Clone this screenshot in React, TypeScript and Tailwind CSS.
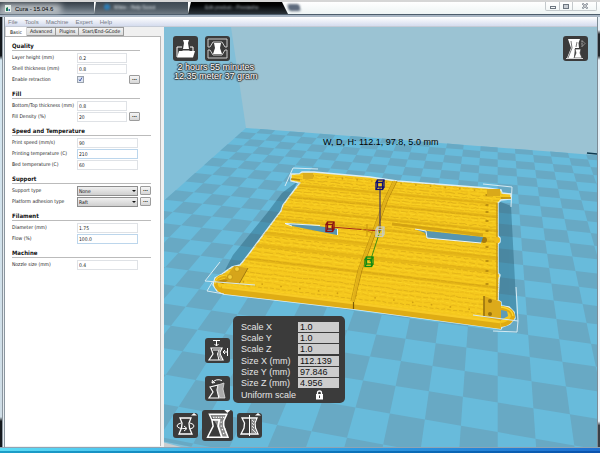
import React from "react";

type Pt = [number, number];

const poly = (pts: Pt[]) => pts.map(([x, y]) => `${x.toFixed(1)},${y.toFixed(1)}`).join(" ");

/* ---------- build plate ---------- */

const DEPTH = 21.8;

// Projects a plate position, counted in 10 mm tiles from the back left corner.
function project(u: number, v: number): Pt {
  const s = u * 0.005255;
  const t = v * 0.0251;
  const w = 1 - s - t;
  return [(246 + 2496 * s - 497.7 * t) / w, (128 + 85 * s + 95 * t) / w];
}

function Floor() {
  const tiles: React.ReactNode[] = [];
  for (let k = -1; k < 22; k++) {
    const v0 = Math.max(0, k + 0.7);
    const v1 = Math.min(DEPTH, k + 1.7);
    if (v1 <= v0) continue;
    for (let u = 0; u < 26; u++) {
      if ((u + k + 2) % 2 !== 0) continue;
      tiles.push(
        <polygon
          key={`${u}:${k}`}
          points={poly([project(u, v0), project(u + 1, v0), project(u + 1, v1), project(u, v1)])}
        />,
      );
    }
  }
  return (
    <g>
      <polygon
        fill="#68bbdb"
        points={poly([project(0, 0), project(26, 0), project(26, DEPTH), project(0, DEPTH)])}
      />
      <g fill="#68a9c4">{tiles}</g>
    </g>
  );
}

/* ---------- printed part ---------- */

const TL: Pt = [302, 174];
const TR: Pt = [497, 191];
const BL: Pt = [222, 287];
const BR: Pt = [499, 321];

function onPart(a: number, b: number): Pt {
  const bb = (b * 0.78) / (1 - b * 0.22);
  const lx = TL[0] + (BL[0] - TL[0]) * bb;
  const ly = TL[1] + (BL[1] - TL[1]) * bb;
  const rx = TR[0] + (BR[0] - TR[0]) * bb;
  const ry = TR[1] + (BR[1] - TR[1]) * bb;
  return [lx + (rx - lx) * a, ly + (ry - ly) * a];
}

function noise(n: number) {
  const x = Math.sin(n * 127.1 + 11.7) * 43758.5453;
  return x - Math.floor(x);
}

const OUTLINE =
  "291,174 299,174 302,172 314,172 370,177 397,181 487,188 501,190 502,193 511,194 511,199 501,200 498,203 498,236 500,238 500,242 498,244 498,273 500,275 499,279 498,300 501,302 501,306 509,307 514,312 515,318 510,324 502,327 501,329 488,327 353,309 224,294 217,291 213,285 215,278 222,274 232,267 240,265 245,259 263,235 281,211 283,205 292,193 300,183 291,181";

function Ribs() {
  const ribs: React.ReactNode[] = [];
  const shades = ["#d6a616", "#ffdc2c", "#e3b118", "#fbd024", "#cf9f16", "#ffd628"];
  for (let i = 0; i < 66; i++) {
    const b = i / 66;
    const pts: Pt[] = [];
    for (let j = 0; j <= 70; j++) {
      const [x, y] = onPart(-0.03 + (j * 1.06) / 70, b);
      pts.push([x, y + (noise(i * 71 + j) - 0.5) * 1.4]);
    }
    const dash = `${3 + Math.round(noise(i) * 7)} ${1 + Math.round(noise(i + 9) * 2)}`;
    ribs.push(
      <polyline
        key={i}
        points={poly(pts)}
        stroke={shades[i % 6]}
        strokeWidth="0.9"
        strokeDasharray={dash}
        fill="none"
        opacity={0.6}
      />,
    );
  }
  const bands = [
    [0.12, 3],
    [0.24, 3],
    [0.36, 3],
    [0.45, 3],
    [0.58, 4],
    [0.68, 3],
    [0.79, 3],
  ];
  return (
    <g clipPath="url(#part)">
      {ribs}
      {bands.map(([b, size]) => {
        const l = onPart(-0.03, b);
        const r = onPart(1, b);
        return (
          <line
            key={b}
            x1={l[0]}
            y1={l[1]}
            x2={r[0]}
            y2={r[1]}
            stroke="#c8960f"
            strokeWidth={size}
            opacity="0.35"
          />
        );
      })}
    </g>
  );
}

function Rivets() {
  const rows = [
    { y: 0.01, n: 12 },
    { y: 0.95, n: 13 },
  ];
  return (
    <g fill="#cf9f12">
      {rows.flatMap(({ y, n }) =>
        Array.from({ length: n }, (_, i) => {
          const [x, yy] = onPart(0.06 + (i * 0.9) / n, y);
          return <circle key={`${y}-${i}`} cx={x} cy={yy} r="0.9" />;
        }),
      )}
      {[195, 205, 212, 221, 231, 247, 261, 271, 284].map((y) => (
        <ellipse key={y} cx={487} cy={y} rx="1.8" ry="1.1" fill="#b88c10" />
      ))}
    </g>
  );
}

function CubeHandle({ x, y, color }: { x: number; y: number; color: string }) {
  return (
    <g transform={`translate(${x} ${y})`} stroke={color} strokeWidth="1.3" fill="none">
      <rect x="-4" y="-2.5" width="6.5" height="7" />
      <rect x="-2.5" y="-5" width="6.5" height="7" />
      <path d="M-4-2.5L-2.5-5M2.5-2.5L4-5M2.5 4.5L4 2M-4 4.5L-2.5 2" />
    </g>
  );
}

function Scene() {
  return (
    <svg
      className="absolute inset-0 h-full w-full"
      viewBox="164 27 433 420"
      preserveAspectRatio="xMinYMin slice"
      aria-hidden="true"
    >
      <clipPath id="part">
        <polygon points={OUTLINE} />
      </clipPath>
      <rect x="164" y="27" width="900" height="900" fill="#9bc3d3" />
      <polygon points="164,27 231,27 246,128 246,447 164,447" fill="#82bfd8" />
      <Floor />
      <polygon points="164,442.5 181,447 164,447" fill="#c9ced0" />
      <path d="M587 153L597 154" stroke="#0d3a50" strokeWidth="1.6" />

      <g fill="#083a52" opacity="0.3">
        <polygon points="298,181 282,193 267,213 233,255 225,270 243,267 282,212" />
        <polygon points="498,201 511,206 517,320 510,308 499,303" />
      </g>

      <polygon points={OUTLINE} fill="#f5c81e" stroke="#dbeef5" strokeWidth="1.4" />
      <Ribs />
      <path d="M397 181L388 199L362 270L354 302" stroke="#b98b0e" strokeWidth="1" fill="none" />
      <path d="M393 181L384 200L358 270L351 301" stroke="#b98b0e" strokeWidth="1" fill="none" opacity="0.7" />
      <path d="M395 181L386 200L360 270L353 302" stroke="#e0b01a" strokeWidth="2.4" fill="none" />
      <polygon points="222,286 353,302 500,321 501,329 353,309 224,294 217,291" fill="#dfac14" />
      <path d="M222 287L353 303L500 322" stroke="#f8cb26" strokeWidth="2.4" fill="none" />
      <path d="M353.5 302V309" stroke="#7a5a08" strokeWidth="1.2" />
      <Rivets />

      <polygon points="234,266 248,268 239,284 222,283" fill="#d6a51a" />
      <path d="M248 268L239 284" stroke="#a27a10" strokeWidth="1" />
      <g fill="#f7d03a" stroke="#b4880f" strokeWidth="0.6">
        <circle cx="237" cy="269" r="2.4" />
        <circle cx="230" cy="277" r="2.4" />
      </g>
      <path d="M226 276Q216 276 216 284Q216 289 222 290" stroke="#e0ac12" strokeWidth="3.5" fill="none" />
      <path d="M226 275Q215 276 215 284" stroke="#fbd22c" strokeWidth="1.2" fill="none" />
      <path d="M217 282Q221 278 228 280L223 284Z" fill="#b98a10" />

      <polygon points="484,296 501,302 501,321 483,317" fill="#dcaa1b" />
      <path d="M484 296V317" stroke="#8d6a0d" strokeWidth="1.4" />
      <g fill="#96700c">
        <circle cx="490" cy="301" r="2" />
        <circle cx="490" cy="314" r="2" />
      </g>
      <polygon points="501,309 507,311 508,316 501,320" fill="#5e9bb5" />
      <path d="M501 308Q513 309 513 317Q510 324 501 325" stroke="#e0aa10" strokeWidth="4" fill="none" />
      <path d="M501 307Q512 308 513 316" stroke="#fcd62e" strokeWidth="1.4" fill="none" />
      <rect x="303" y="173" width="10" height="6" fill="#dcae1c" />
      <rect x="487" y="189" width="13" height="7" fill="#d9a91a" />
      <path d="M291 179L300 180M501 198L511 198" stroke="#b98a0d" strokeWidth="1.6" />
      <path d="M497 203V300" stroke="#c7940e" strokeWidth="1.4" />
      <circle cx="484" cy="240" r="3" fill="#a67a0b" />
      <circle cx="497" cy="240" r="3" fill="#f0bd1a" />

      <polygon points="285,223 304,224 338,229 337,235 292,226" fill="#5795b0" />
      <path d="M292 226L285 223.5L320 225.5M337.5 229V235" stroke="#e9f5fa" strokeWidth="1" fill="none" />
      <polygon points="415,229 427,231 483,237 481,243 427,238 425,233" fill="#5795b0" />
      <path d="M415 229L426 231L427 238L481 243" stroke="#e9f5fa" strokeWidth="1" fill="none" />
      <path d="M392 224L483 235" stroke="#c18f0e" strokeWidth="3" opacity="0.6" />

      <g stroke="#d5eaf2" strokeWidth="1" fill="none">
        <path d="M285 186L293 168L318 169" />
        <path d="M220 262L205 281L255 285M213 281L207 291L224 294" />
        <path d="M483 184L512 187L511 207" />
        <path d="M473 315L518 321L516 287M493 331L517 332L518 321" />
      </g>

      <path d="M331 227L380 231" stroke="#a3261a" strokeWidth="1" />
      <path d="M380 187V231" stroke="#241c66" strokeWidth="1" />
      <path d="M380 231L370 262" stroke="#3f8f13" strokeWidth="1" />
      <path d="M367 224V236M361 229L373 233" stroke="#c79310" strokeWidth="1" />
      <CubeHandle x={380} y={232} color="#c9cdb8" />
      <CubeHandle x={330} y={227} color="#8b1212" />
      <CubeHandle x={380} y={185} color="#101075" />
      <CubeHandle x={369} y={262} color="#128a12" />
    </svg>
  );
}

/* ---------- tool icons ---------- */

function Tool({ label, large, children }: { label: string; large?: boolean; children: React.ReactNode }) {
  return (
    <button
      type="button"
      aria-label={label}
      className={`block rounded-[3px] bg-[#3b3b3b] ${large ? "h-[31px] w-[31px]" : "h-[25px] w-[25px]"}`}
    >
      <svg viewBox="0 0 25 25" className="h-full w-full" fill="none" stroke="#fff" strokeWidth="1">
        {children}
      </svg>
    </button>
  );
}

const LoadIcon = () => (
  <Tool label="Load model">
    <path d="M10 4h6l-1 3 1 6h-6l1-6z" fill="#fff" stroke="none" />
    <path d="M9 11H4V21M17 11H20V15" />
    <path d="M6 15H9L10 14.5H16L17 15H22L20 21.5H4Z" fill="#fff" stroke="none" />
  </Tool>
);

const SaveIcon = () => (
  <Tool label="Save toolpath">
    <path d="M3 11V3H22V11H20L17 6H8L5 11ZM3 14V22H22V14H20L17 19H8L5 14Z" stroke="#ccc" />
    <path d="M9 7H16L15 12L17 18H8L10 12Z" fill="#fff" stroke="none" />
  </Tool>
);

const ViewIcon = () => (
  <Tool label="View mode">
    <path d="M5 3H17L15.5 7L16 12H12L11 22H4L8 12Z" fill="#fff" stroke="none" />
    <path d="M8 5L9 12L5 22M14 6L13 11" stroke="#555" strokeWidth="0.8" />
    <path d="M12 13H18L17 17L19 22H11L13 17Z" fill="#fff" stroke="#3b3b3b" strokeWidth="0.7" />
    <path d="M3 22.5H20" strokeWidth="0.8" />
    <path d="M19 4.5L22 7.5L19 10.5Z" stroke="#ccc" strokeDasharray="1 0.6" />
  </Tool>
);

const RotateIcon = () => (
  <Tool label="Rotate">
    <path d="M7 5H18L16 10L16.5 15L19 21H6L8.5 15L9 10Z" strokeWidth="1.3" />
    <path d="M8 10Q4 11 4 13Q5 16 13 15.5M17 10Q21 11 21 13Q21 15 17 16M11 13L14 15.5L11 18" />
    <path d="M18 2.5L21 0L24 2.5Z" fill="#fff" stroke="none" />
  </Tool>
);

const ScaleIcon = () => (
  <Tool label="Scale" large>
    <path d="M7 4H20L18 8L17.5 13L21 22H16L13 14Z" fill="#8a8a8a" stroke="none" />
    <path d="M6 3.5H20L17.5 9L17.5 13L21 22H4.5L9 13L8 8Z" strokeWidth="1.2" />
    <path d="M8 8H14L13 13L16 22" strokeWidth="1.4" />
    <path d="M9 6H19M15 10L18 9M15 13H18M16 16L19 15M17 19L20 18" strokeDasharray="1 1" />
    <path d="M18 0H23L20.500 2.500Z" fill="#fff" stroke="none" />
  </Tool>
);

const MirrorIcon = () => (
  <Tool label="Mirror">
    <path d="M5 5H20L18 10L18.5 15L21 21H4L7 15L7.5 10Z" strokeWidth="1.3" />
    <path d="M14 6H19L17 11L18 16L20 20H14Z" fill="#888" stroke="none" />
    <path d="M15 7L17 9M15 10L17 12M15 13L17 15M15 16L19 20" strokeWidth="0.8" />
    <path d="M12.5 2V23" />
    <path d="M18 2.5L21 0L24 2.5Z" fill="#fff" stroke="none" />
  </Tool>
);

const ScaleMaxIcon = () => (
  <Tool label="Scale to maximum size">
    <path d="M8 2.5H15M11.5 3V8M9.5 6L11.5 8L13.5 6" />
    <path d="M22.5 10V18M22 14H18M20 12L18 14L20 16" />
    <path d="M6 10H17L15 14L15.5 17L18 22H4L8 16Z" strokeWidth="1.2" />
    <path d="M8 12H14L12.5 16L14 22" />
    <path d="M14 11L16 10L14.5 15L17 21H15L13 16Z" fill="#aaa" stroke="none" />
  </Tool>
);

const ScaleResetIcon = () => (
  <Tool label="Reset scale">
    <path d="M7 7Q11 2 17 4.5M7 7L10 6.5M7 7L7.5 4" />
    <path d="M5 11L13 9L12 14L14 22H4L8 16Z" strokeWidth="1.2" />
    <path d="M13 9L19 7L18 13L20 22H15L12.5 15Z" fill="#aaa" stroke="#ddd" strokeWidth="0.8" />
  </Tool>
);

function ScalePanel() {
  const groups = [
    [
      ["Scale X", "1.0"],
      ["Scale Y", "1.0"],
      ["Scale Z", "1.0"],
    ],
    [
      ["Size X (mm)", "112.139"],
      ["Size Y (mm)", "97.846"],
      ["Size Z (mm)", "4.956"],
    ],
  ];
  return (
    <div className="flex w-28 flex-col gap-px rounded-[5px] bg-[#3b3b3b] pt-[5px] pr-[6px] pb-[2px] pl-2 text-[9px] leading-[12px] text-[#e6e6e6]">
      {groups.map((rows, i) => (
        <div key={i}>
          {rows.map(([label, value]) => (
            <label key={label} className="flex h-[11px] items-center justify-between">
              <span className="whitespace-nowrap">{label}</span>
              <input
                defaultValue={value}
                className="h-[10px] w-[41px] bg-[#cdcdcd] pl-[2px] leading-[10px] text-[#111] outline-none"
              />
            </label>
          ))}
        </div>
      ))}
      <div className="flex h-[12px] items-center">
        <span className="w-[74px]">Uniform scale</span>
        <button type="button" aria-label="Lock uniform scale">
          <svg viewBox="0 0 9 10" className="h-[10px] w-[9px]">
            <path d="M2.5 5V3Q2.5 1 4.5 1Q6.5 1 6.5 3V5" stroke="#fff" strokeWidth="1.3" fill="none" />
            <rect x="1" y="4" width="7" height="5.5" fill="#fff" />
            <path d="M4.5 5.5V8" stroke="#3b3b3b" />
          </svg>
        </button>
      </div>
    </div>
  );
}

function Viewport() {
  return (
    <main className="relative flex min-w-0 flex-1 flex-col justify-between overflow-hidden">
      <Scene />
      <div className="relative flex items-start justify-between pt-[9px] pr-[9px] pl-[9px]">
        <div>
          <div className="flex gap-[7px]">
            <LoadIcon />
            <SaveIcon />
          </div>
          <p className="pt-[2px] pl-px text-center text-[9px] leading-[9px] whitespace-nowrap text-white [text-shadow:0_0_1px_#333,1px_0_1px_#333,-1px_0_1px_#333,0_1px_1px_#333,0_-1px_1px_#333]">
            2 hours 55 minutes
            <br />
            12.35 meter 37 gram
          </p>
        </div>
        <ViewIcon />
      </div>
      <p className="absolute top-[110px] left-[159px] text-[9px] leading-[11px] whitespace-nowrap text-black">
        W, D, H: 112.1, 97.8, 5.0 mm
      </p>
      <div className="relative flex flex-col gap-[7px] pb-[6px] pl-[9px]">
        <div className="flex items-end gap-[3px] pl-8">
          <div className="flex flex-col gap-[13px] pb-[2px]">
            <ScaleMaxIcon />
            <ScaleResetIcon />
          </div>
          <ScalePanel />
        </div>
        <div className="flex items-center gap-[4px]">
          <RotateIcon />
          <ScaleIcon />
          <MirrorIcon />
        </div>
      </div>
    </main>
  );
}

/* ---------- settings panel ---------- */

type Field = {
  label: string;
  value?: string;
  checked?: boolean;
  options?: string[];
  more?: boolean;
  focus?: boolean;
};

const SECTIONS: { title: string; narrow?: boolean; fields: Field[] }[] = [
  {
    title: "Quality",
    narrow: true,
    fields: [
      { label: "Layer height (mm)", value: "0.2" },
      { label: "Shell thickness (mm)", value: "0.8" },
      { label: "Enable retraction", checked: true, more: true },
    ],
  },
  {
    title: "Fill",
    narrow: true,
    fields: [
      { label: "Bottom/Top thickness (mm)", value: "0.8" },
      { label: "Fill Density (%)", value: "20", more: true },
    ],
  },
  {
    title: "Speed and Temperature",
    fields: [
      { label: "Print speed (mm/s)", value: "90" },
      { label: "Printing temperature (C)", value: "210", focus: true },
      { label: "Bed temperature (C)", value: "60" },
    ],
  },
  {
    title: "Support",
    fields: [
      { label: "Support type", options: ["None"], more: true },
      { label: "Platform adhesion type", options: ["Raft"], more: true },
    ],
  },
  {
    title: "Filament",
    fields: [
      { label: "Diameter (mm)", value: "1.75" },
      { label: "Flow (%)", value: "100.0", focus: true },
    ],
  },
  { title: "Machine", fields: [{ label: "Nozzle size (mm)", value: "0.4" }] },
];

function FieldRow({ field }: { field: Field }) {
  const id = field.label.toLowerCase().replace(/[^a-z]+/g, "-");
  return (
    <div className="grid h-[11px] grid-cols-[65px_1fr_11px] items-center">
      <label htmlFor={id} className="whitespace-nowrap text-[#222]">
        {field.label}
      </label>
      <div className="mr-[2px] flex items-center">
        {field.options ? (
          <div className="relative w-full">
            <select
              id={id}
              className="block h-[10px] w-full appearance-none border border-[#8d8d8d] bg-linear-to-b from-[#f0f0f0] to-[#cfcfcf] pl-px leading-[8px] text-[#111]"
            >
              {field.options.map((o) => (
                <option key={o}>{o}</option>
              ))}
            </select>
            <svg viewBox="0 0 4 2" className="pointer-events-none absolute top-[4px] right-[2px] h-[2px] w-[4px]">
              <path d="M0 0H4L2 2Z" fill="#111" />
            </svg>
          </div>
        ) : field.checked ? (
          <span className="relative block h-[7px] w-[7px]">
            <input
              id={id}
              type="checkbox"
              defaultChecked
              className="block h-[7px] w-[7px] appearance-none border border-[#9aa3ad] bg-[#dfe5f2]"
            />
            <svg viewBox="0 0 7 7" className="pointer-events-none absolute inset-0 h-[7px] w-[7px]">
              <path d="M2 3.5L3 5L5 1.5" stroke="#4a62ac" fill="none" />
            </svg>
          </span>
        ) : (
          <input
            id={id}
            defaultValue={field.value}
            className={`h-[10px] w-full border bg-white pl-px leading-[8px] text-[#222] outline-none ${
              field.focus ? "border-[#bcd6ec]" : "border-[#dfe2e6]"
            }`}
          />
        )}
      </div>
      {field.more && (
        <button
          type="button"
          aria-label={`${field.label} settings`}
          className="flex h-[9px] items-center justify-center rounded-[1px] border border-[#9c9c9c] bg-linear-to-b from-[#f6f6f6] to-[#d6d6d6] text-[#111]"
        >
          <span className="pb-[2px] leading-[5px] font-bold">...</span>
        </button>
      )}
    </div>
  );
}

function Sidebar() {
  const tabs = ["Advanced", "Plugins", "Start/End-GCode"];
  return (
    <aside className="flex w-[159px] shrink-0 flex-col bg-[#f0f0f0] pr-[3px] pb-px font-['DejaVu_Sans_Condensed','DejaVu_Sans',sans-serif] text-[5px] leading-[9px]">
      <div role="tablist" className="flex h-[9px] items-end text-[#111]">
        <button
          type="button"
          role="tab"
          aria-selected="true"
          className="h-[9px] w-[22px] border-x border-[#d5d5d5] bg-white leading-[8px]"
        >
          Basic
        </button>
        {tabs.map((t) => (
          <button
            key={t}
            type="button"
            role="tab"
            aria-selected="false"
            className="h-[9px] border border-l-0 border-[#9a9a9a] bg-linear-to-b from-[#f3f3f3] to-[#dcdcdc] px-[3px] leading-[7px] whitespace-nowrap"
          >
            {t}
          </button>
        ))}
      </div>
      <form className="flex-1 border-t border-r border-[#b8b8b8] bg-white pl-[7px]">
        {SECTIONS.map((s) => (
          <section key={s.title} className={s.narrow ? "w-[128px]" : "w-[139px]"}>
            <div className="pt-1">
              <h2 className="h-[10px] border-b border-[#bbb] text-[6px] leading-[9px] font-bold text-[#111]">
                {s.title}
              </h2>
            </div>
            <div className="pt-px">
              {s.fields.map((f) => (
                <FieldRow key={f.label} field={f} />
              ))}
            </div>
          </section>
        ))}
      </form>
    </aside>
  );
}

/* ---------- window frame ---------- */

function TitleBar() {
  return (
    <header className="relative flex h-[17px] shrink-0 overflow-hidden border-t-2 border-b-2 border-t-[#d6d6d6] border-b-[#a9b6c4] bg-[#fbfdfd]">
      <div className="flex h-[13px] flex-1 border-b border-[#4d5d6c] bg-linear-to-b from-white to-[#eef4f4] text-[5px] leading-[10px] whitespace-nowrap">
        <div className="w-[94px] bg-linear-to-b from-[#343d46] via-[#5a6670] to-[#8e99a2]" />
        <div className="w-[94px] bg-linear-to-b from-[#3d4852] via-[#4e5962] to-[#6d7882] pl-[10px] text-[#dfe6ec] [clip-path:polygon(2px_0,100%_0,100%_100%,0_100%)]">
          <span className="flex items-center gap-1 blur-[1px]">
            <i className="block h-[6px] w-[6px] rounded-full bg-[#2f7db4]" />
            Wixie - Help Scout
          </span>
        </div>
        <div className="w-[100px] bg-linear-to-b from-black via-[#101316] to-[#2c343a] pl-[17px] text-[#a8b0b6] [clip-path:polygon(3px_0,94px_0,100%_100%,0_100%)]">
          <span className="block blur-[1px]">Edit product - Prestasho</span>
        </div>
        <div className="mt-[2px] h-[7px] w-[12px] skew-x-12 rounded-[2px] bg-[#5d6a7c] blur-[1px]" />
      </div>
      <div className="absolute top-0 left-[5px] flex h-[13px] items-center gap-[4px] pr-2">
        <div className="absolute inset-y-[2px] -left-1 right-0 bg-white/60 blur-[3px]" />
        <svg viewBox="0 0 6 7" className="relative h-[7px] w-[6px]">
          <rect width="6" height="7" fill="#e6efe9" />
          <path d="M1 6V3L3 2V6Z" fill="#1d7a55" />
          <path d="M3.5 6V4H5V6Z" fill="#3f6db0" />
        </svg>
        <h1 className="relative text-[6px] leading-[10px] text-black">Cura - 15.04.6</h1>
      </div>
      <div className="absolute top-0 right-[3px] flex h-[9px] rounded-b-[2px] border border-t-0 border-[#c4c9cc] text-[#59636d]">
        <button type="button" aria-label="Minimize" className="flex w-[14px] items-center justify-center border-r border-[#c4c9cc]">
          <i className="mt-[2px] block h-[3px] w-[6px] border border-[#6d7680]" />
        </button>
        <button type="button" aria-label="Maximize" className="flex w-[13px] items-center justify-center border-r border-[#c4c9cc]">
          <i className="block h-[5px] w-[6px] border border-[#6d7680] bg-[#c9ced4]" />
        </button>
        <button type="button" aria-label="Close" className="flex w-[23px] items-center justify-center">
          <svg viewBox="0 0 6 6" className="h-[6px] w-[6px]">
            <path d="M0.5 0.5L5.5 5.5M5.5 0.5L0.5 5.5" stroke="#6d7680" strokeWidth="1.6" />
            <path d="M1 1L5 5M5 1L1 5" stroke="#fff" strokeWidth="0.6" />
          </svg>
        </button>
      </div>
    </header>
  );
}

export default function App() {
  return (
    <div className="flex min-h-screen flex-col bg-[#eaf3f9] font-['Liberation_Sans',Arial,sans-serif]">
      <TitleBar />
      <div className="flex flex-1">
        <div className="flex w-[5px] shrink-0">
          <div className="w-[2px] bg-[linear-gradient(#14181c_9%,#d5e7f1_10%,#cfdde6_93%,#15191d_94%,#15191d)]" />
          <div className="flex-1 border-x border-[#8b969f] bg-[#e6edf2]" />
        </div>
        <div className="flex min-w-0 flex-1 flex-col">
          <nav className="flex h-[10px] shrink-0 items-center gap-[7px] border-b border-[#c5cbd6] bg-linear-to-b from-white to-[#d5dcee] pl-[3px] text-[6px] leading-[8px] text-[#777c86]">
            {["File", "Tools", "Machine", "Expert", "Help"].map((m) => (
              <button key={m} type="button">
                {m}
              </button>
            ))}
          </nav>
          <div className="flex flex-1">
            <Sidebar />
            <Viewport />
          </div>
        </div>
        <div className="w-[3px] shrink-0 border-l border-[#7d8b95] bg-[linear-gradient(#e8f1f8_3%,#23272b_4%,#23272b_9%,#e8f1f8_10%,#e8f1f8_94%,#3a3f45_95%,#3a3f45)]" />
      </div>
      <footer className="h-[6px] shrink-0 border-t border-[#8ea4b4] bg-linear-to-r from-[#5fdcf5] via-[#35a4e4] to-[#1f6fd0]">
        <div className="mt-[3px] h-[2px] bg-linear-to-r from-[#1d9fc8] to-[#0c53ae]" />
      </footer>
    </div>
  );
}
